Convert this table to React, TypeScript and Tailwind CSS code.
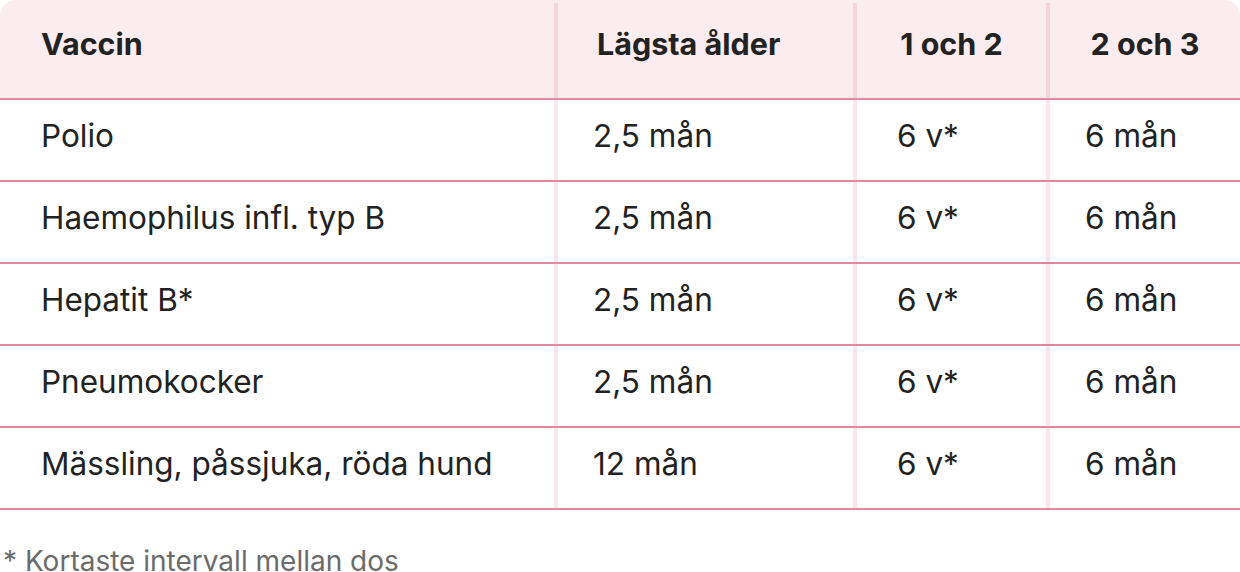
import React from 'react';

const rows = [
  ['Polio', '2,5 mån', '6 v*', '6 mån'],
  ['Haemophilus infl. typ B', '2,5 mån', '6 v*', '6 mån'],
  ['Hepatit B*', '2,5 mån', '6 v*', '6 mån'],
  ['Pneumokocker', '2,5 mån', '6 v*', '6 mån'],
  ['Mässling, påssjuka, röda hund', '12 mån', '6 v*', '6 mån'],
];

const App = () => {
  return (
    <div className="w-[1240px] bg-white text-[#222] font-['Inter',sans-serif]">
      <div className="grid grid-cols-[554px_299px_193px_194px] bg-[#faecef] rounded-t-2xl h-[100px] border-b-2 border-[#e08aa0] text-[30.5px] font-bold">
        <div className="pl-[41px] pb-[10px] flex items-center">Vaccin</div>
        <div className="mt-[3px] border-l-4 border-[#f3d5dd] pl-[39px] pb-[13px] flex items-center">Lägsta ålder</div>
        <div className="mt-[3px] border-l-4 border-[#f3d5dd] pb-[13px] flex items-center justify-center">1 och 2</div>
        <div className="mt-[3px] border-l-4 border-[#f3d5dd] pb-[13px] flex items-center justify-center">2 och 3</div>
      </div>
      {rows.map((r, i) => (
        <div key={i} className="grid grid-cols-[554px_299px_193px_194px] h-[82px] border-b-2 border-[#e08aa0] text-[31.5px]">
          <div className="pl-[41px] pb-[8px] flex items-center">{r[0]}</div>
          <div className="border-l-4 border-[#fbe6ec] pl-[35px] pb-[8px] flex items-center">{r[1]}</div>
          <div className="border-l-4 border-[#fbe6ec] pl-[40px] pb-[8px] flex items-center">{r[2]}</div>
          <div className="border-l-4 border-[#fbe6ec] pl-[35px] pb-[8px] flex items-center">{r[3]}</div>
        </div>
      ))}
      <div className="pl-[3px] pt-[30px] text-[28px] text-[#6b6b6b]">* Kortaste intervall mellan dos</div>
    </div>
  );
};

export default App;
